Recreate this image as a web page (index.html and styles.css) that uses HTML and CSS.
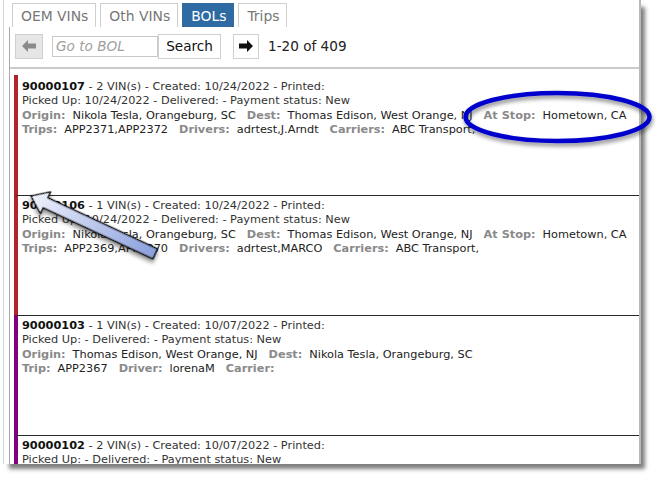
FILE: index.html
```html
<!DOCTYPE html>
<html lang="en">
<head>
  <meta charset="UTF-8">
  <title>BOLs</title>
  <link rel="stylesheet" href="styles.css">
</head>
<body>
  <div class="frame">
    <div class="tabs">
      <span class="tab">OEM VINs</span>
      <span class="tab">Oth VINs</span>
      <span class="tab active">BOLs</span>
      <span class="tab">Trips</span>
    </div>

    <div class="panel">
      <div class="toolbar">
        <button class="nav-btn disabled" type="button">
          <svg width="14" height="12" viewBox="0 0 14 12"><path d="M0 6 L6 0 L6 3.5 L14 3.5 L14 8.5 L6 8.5 L6 12 Z" fill="#8a8a8a"/></svg>
        </button>
        <input class="goto" type="text" placeholder="Go to BOL">
        <button class="search-btn" type="button">Search</button>
        <button class="nav-btn" type="button">
          <svg width="14" height="12" viewBox="0 0 14 12"><path d="M14 6 L8 0 L8 3.5 L0 3.5 L0 8.5 L8 8.5 L8 12 Z" fill="#111"/></svg>
        </button>
        <span class="paging">1-20 of 409</span>
      </div>

      <div class="list">
        <div class="bol red">
          <div><b>90000107</b> - 2 VIN(s) - Created: 10/24/2022 - Printed:</div>
          <div>Picked Up: 10/24/2022 - Delivered: - Payment status: New</div>
          <div><span class="lbl">Origin:</span><span class="val">Nikola Tesla, Orangeburg, SC</span><span class="lbl">Dest:</span><span class="val">Thomas Edison, West Orange, NJ</span><span class="lbl">At Stop:</span><span class="val">Hometown, CA</span></div>
          <div><span class="lbl">Trips:</span><span class="val">APP2371,APP2372</span><span class="lbl">Drivers:</span><span class="val">adrtest,J.Arndt</span><span class="lbl">Carriers:</span><span class="val">ABC Transport,</span></div>
        </div>
        <div class="bol red">
          <div><b>90000106</b> - 1 VIN(s) - Created: 10/24/2022 - Printed:</div>
          <div>Picked Up: 10/24/2022 - Delivered: - Payment status: New</div>
          <div><span class="lbl">Origin:</span><span class="val">Nikola Tesla, Orangeburg, SC</span><span class="lbl">Dest:</span><span class="val">Thomas Edison, West Orange, NJ</span><span class="lbl">At Stop:</span><span class="val">Hometown, CA</span></div>
          <div><span class="lbl">Trips:</span><span class="val">APP2369,APP2370</span><span class="lbl">Drivers:</span><span class="val">adrtest,MARCO</span><span class="lbl">Carriers:</span><span class="val">ABC Transport,</span></div>
        </div>
        <div class="bol purple">
          <div><b>90000103</b> - 1 VIN(s) - Created: 10/07/2022 - Printed:</div>
          <div>Picked Up: - Delivered: - Payment status: New</div>
          <div><span class="lbl">Origin:</span><span class="val">Thomas Edison, West Orange, NJ</span><span class="lbl">Dest:</span><span class="val">Nikola Tesla, Orangeburg, SC</span></div>
          <div><span class="lbl">Trip:</span><span class="val">APP2367</span><span class="lbl">Driver:</span><span class="val">lorenaM</span><span class="lbl">Carrier:</span></div>
        </div>
        <div class="bol purple">
          <div><b>90000102</b> - 2 VIN(s) - Created: 10/07/2022 - Printed:</div>
          <div>Picked Up: - Delivered: - Payment status: New</div>
        </div>
      </div>
    </div>
  </div>

  <!-- callouts drawn over the list -->
  <svg class="marks" width="658" height="481" viewBox="0 0 658 481">
    <defs>
      <filter id="soft" x="-20%" y="-40%" width="140%" height="180%">
        <feDropShadow dx="1" dy="3" stdDeviation="2" flood-color="#000" flood-opacity="0.45"/>
      </filter>
      <linearGradient id="arrowFill" x1="0" y1="0" x2="1" y2="0">
        <stop offset="0" stop-color="#eef2fc"/>
        <stop offset="1" stop-color="#8a9fdc"/>
      </linearGradient>
    </defs>
    <ellipse cx="557.5" cy="117" rx="92" ry="24" fill="none" stroke="#0000cc" stroke-width="4.5" filter="url(#soft)"/>
    <g transform="translate(31 196) rotate(25)" filter="url(#soft)">
      <polygon points="0,0 16,-12 16,-5.5 137,-5.5 137,5.5 16,5.5 16,12" fill="url(#arrowFill)" stroke="#111" stroke-width="1.5" stroke-linejoin="round"/>
    </g>
  </svg>
</body>
</html>
```

FILE: styles.css
```css
body {
  margin: 0;
  position: relative;
  width: 658px;
  height: 481px;
  overflow: hidden;
  background: #fff;
  font-family: "DejaVu Sans", Verdana, sans-serif;
}

.frame {
  margin-left: 3px;
  width: 635px;
  height: 464px;
  border-left: 1px solid #d4d4d4;
  border-right: 2px solid #b8b8b8;
  background: #fff;
  box-shadow: 5px 6px 4px -1px rgba(0, 0, 0, 0.5);
  overflow: hidden;
}

/* tab strip */
.tabs {
  display: flex;
  gap: 4px;
  padding: 3px 0 0 8px;
  height: 24px;
}

.tab {
  display: flex;
  align-items: center;
  padding: 1px 7px 0 8px;
  border: 1px solid #cfcfcf;
  border-bottom: none;
  color: #777;
  font-size: 13.9px;
}

.tab.active {
  background: #2e6ba3;
  border-color: #2e6ba3;
  color: #fff;
}

.panel {
  margin-left: 5px;
  border-left: 1px solid #a8a8a8;
}

/* paging toolbar */
.toolbar {
  display: flex;
  align-items: center;
  height: 36px;
  padding: 1px 0 3px 5px;
  border-bottom: 2px solid #cbcbcb;
  font-size: 13.6px;
}

.nav-btn {
  display: flex;
  align-items: center;
  justify-content: center;
  width: 26px;
  height: 25px;
  padding: 0;
  background: #fff;
  border: 1px solid #d0d0d0;
}

.nav-btn.disabled {
  width: 28px;
  background: #e6e6e6;
}

.nav-btn:last-of-type {
  margin-left: 12px;
}

.goto {
  box-sizing: border-box;
  width: 106px;
  height: 21px;
  margin-left: 9px;
  padding: 0 3px;
  border: 1px solid #c8c8c8;
  font-family: inherit;
  font-size: 13.6px;
}

.goto::placeholder {
  color: #a0a0a0;
  font-style: italic;
}

.search-btn {
  box-sizing: border-box;
  width: 63px;
  height: 25px;
  padding: 0;
  background: #fff;
  border: 1px solid #d0d0d0;
  font-family: inherit;
  font-size: 13.6px;
  color: #111;
}

.paging {
  margin-left: 9px;
  color: #222;
}

/* BOL list */
.list {
  margin-top: 6px;
  padding-left: 4px;
  font-size: 11.3px;
  line-height: 14.3px;
  color: #333;
}

.bol {
  box-sizing: border-box;
  height: 120px;
  padding: 5px 0 0 4px;
  border-left: 4px solid #b0242b;
}

.bol + .bol {
  padding-top: 3px;
  border-top: 1px solid #2a2a2a;
}

.bol.purple {
  border-left-color: #800080;
}

.bol b {
  color: #111;
}

.lbl {
  font-weight: bold;
  color: #8a8a8a;
  margin-right: 7px;
}

.val {
  color: #222;
  margin-right: 11px;
}

.marks {
  position: absolute;
  top: 0;
  left: 0;
  pointer-events: none;
}
```
